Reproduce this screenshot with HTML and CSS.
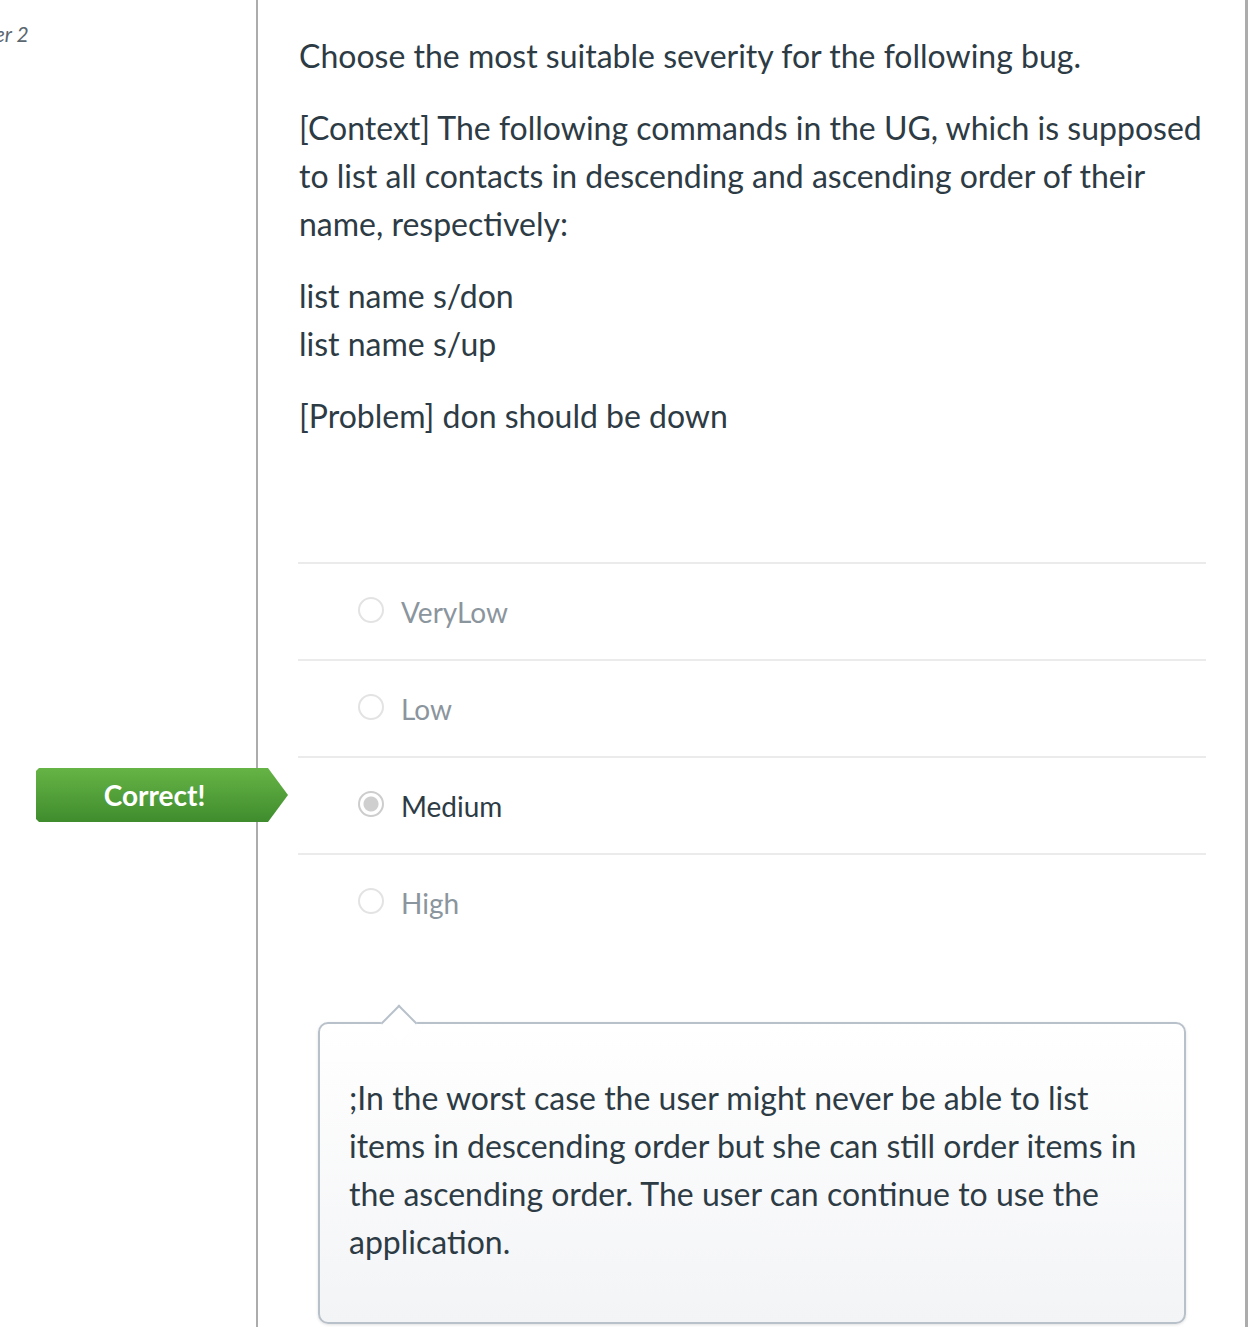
FILE: index.html
```html
<!DOCTYPE html>
<html lang="en">
<head>
<meta charset="utf-8">
<title>Quiz question</title>
<link rel="stylesheet" href="styles.css">
</head>
<body>
<div class="page">
  <aside class="side">
    <div class="qnum">Answer 2</div>
  </aside>
  <main class="main">
    <div class="question">
      <p>Choose the most suitable severity for the following bug.</p>
      <p>[Context] The following commands in the UG, which is supposed to list all contacts in descending and ascending order of their name, respectively:</p>
      <p>list name s/don<br>list name s/up</p>
      <p>[Problem] don should be down</p>
    </div>
    <div class="answers">
      <div class="answer"><span class="radio"></span><span class="label">VeryLow</span></div>
      <div class="answer"><span class="radio"></span><span class="label">Low</span></div>
      <div class="answer selected"><span class="tag">Correct!</span><span class="radio checked"></span><span class="label">Medium</span></div>
      <div class="answer last"><span class="radio"></span><span class="label">High</span></div>
    </div>
    <div class="feedback">
      <p>;In the worst case the user might never be able to list items in descending order but she can still order items in the ascending order. The user can continue to use the application.</p>
    </div>
  </main>
  <div class="rest"></div>
</div>
</body>
</html>
```
FILE: styles.css
```css
html, body {
  margin: 0;
  padding: 0;
  background: #fff;
}
body {
  font-family: Lato, "Open Sans", "Liberation Sans", sans-serif;
  color: #2d3b45;
  overflow: hidden;
}
.page {
  display: flex;
  min-height: 1327px;
}
.side {
  width: 256px;
  flex: none;
  border-right: 2px solid #acacac;
  overflow: hidden;
}
.qnum {
  margin-top: 20px;
  margin-left: -53px;
  font-size: 21px;
  font-style: italic;
  color: #5b6770;
  line-height: 28px;
  white-space: nowrap;
}
.main {
  width: 908px;
  flex: none;
  padding: 32px 39px 0 40px;
  border-right: 3px solid #acacac;
}
.rest {
  flex: 1;
}
.question {
  padding-left: 1px;
}
.question p {
  margin: 0 0 24px 0;
  font-size: 32px;
  line-height: 48px;
}
.answers {
  margin-top: 122px;
}
.answer {
  position: relative;
  display: flex;
  align-items: center;
  height: 95px;
  border-top: 2px solid #ebebeb;
  padding-left: 60px;
  gap: 17px;
}
.radio {
  width: 22px;
  height: 22px;
  border: 2px solid #e3e3e3;
  border-radius: 50%;
  background: #fff;
  box-sizing: content-box;
  margin-top: -3px;
}
.radio.checked {
  border-color: #cdcdcd;
  background: radial-gradient(circle, #cfcfcf 0 7px, #fff 8px);
}
.label {
  font-size: 28px;
  color: #8b959d;
  line-height: 40px;
}
.selected .label {
  color: #2d3b45;
}
.tag {
  position: absolute;
  left: -262px;
  top: 10px;
  width: 252px;
  height: 54px;
  box-sizing: border-box;
  padding-right: 15px;
  background: linear-gradient(#66b445, #3f8c2e);
  clip-path: polygon(0 3px, 3px 0, 232px 0, 252px 27px, 232px 54px, 3px 54px, 0 51px);
  color: #fff;
  font-size: 28px;
  font-weight: 700;
  line-height: 54px;
  text-align: center;
}
.feedback {
  position: relative;
  margin: 72px 20px 0 20px;
  border: 2px solid #b8c1ca;
  border-radius: 10px;
  background: linear-gradient(#ffffff, #f3f4f6);
  padding: 50px 28px 56px 29px;
  box-shadow: 0 1px 3px rgba(0,0,0,0.12);
}
.feedback::before {
  content: "";
  position: absolute;
  left: 66px;
  top: -14px;
  width: 24px;
  height: 24px;
  background: #fff;
  border-left: 2px solid #b8c1ca;
  border-top: 2px solid #b8c1ca;
  transform: rotate(45deg);
}
.feedback p {
  margin: 0;
  font-size: 32px;
  line-height: 48px;
  position: relative;
}
```
